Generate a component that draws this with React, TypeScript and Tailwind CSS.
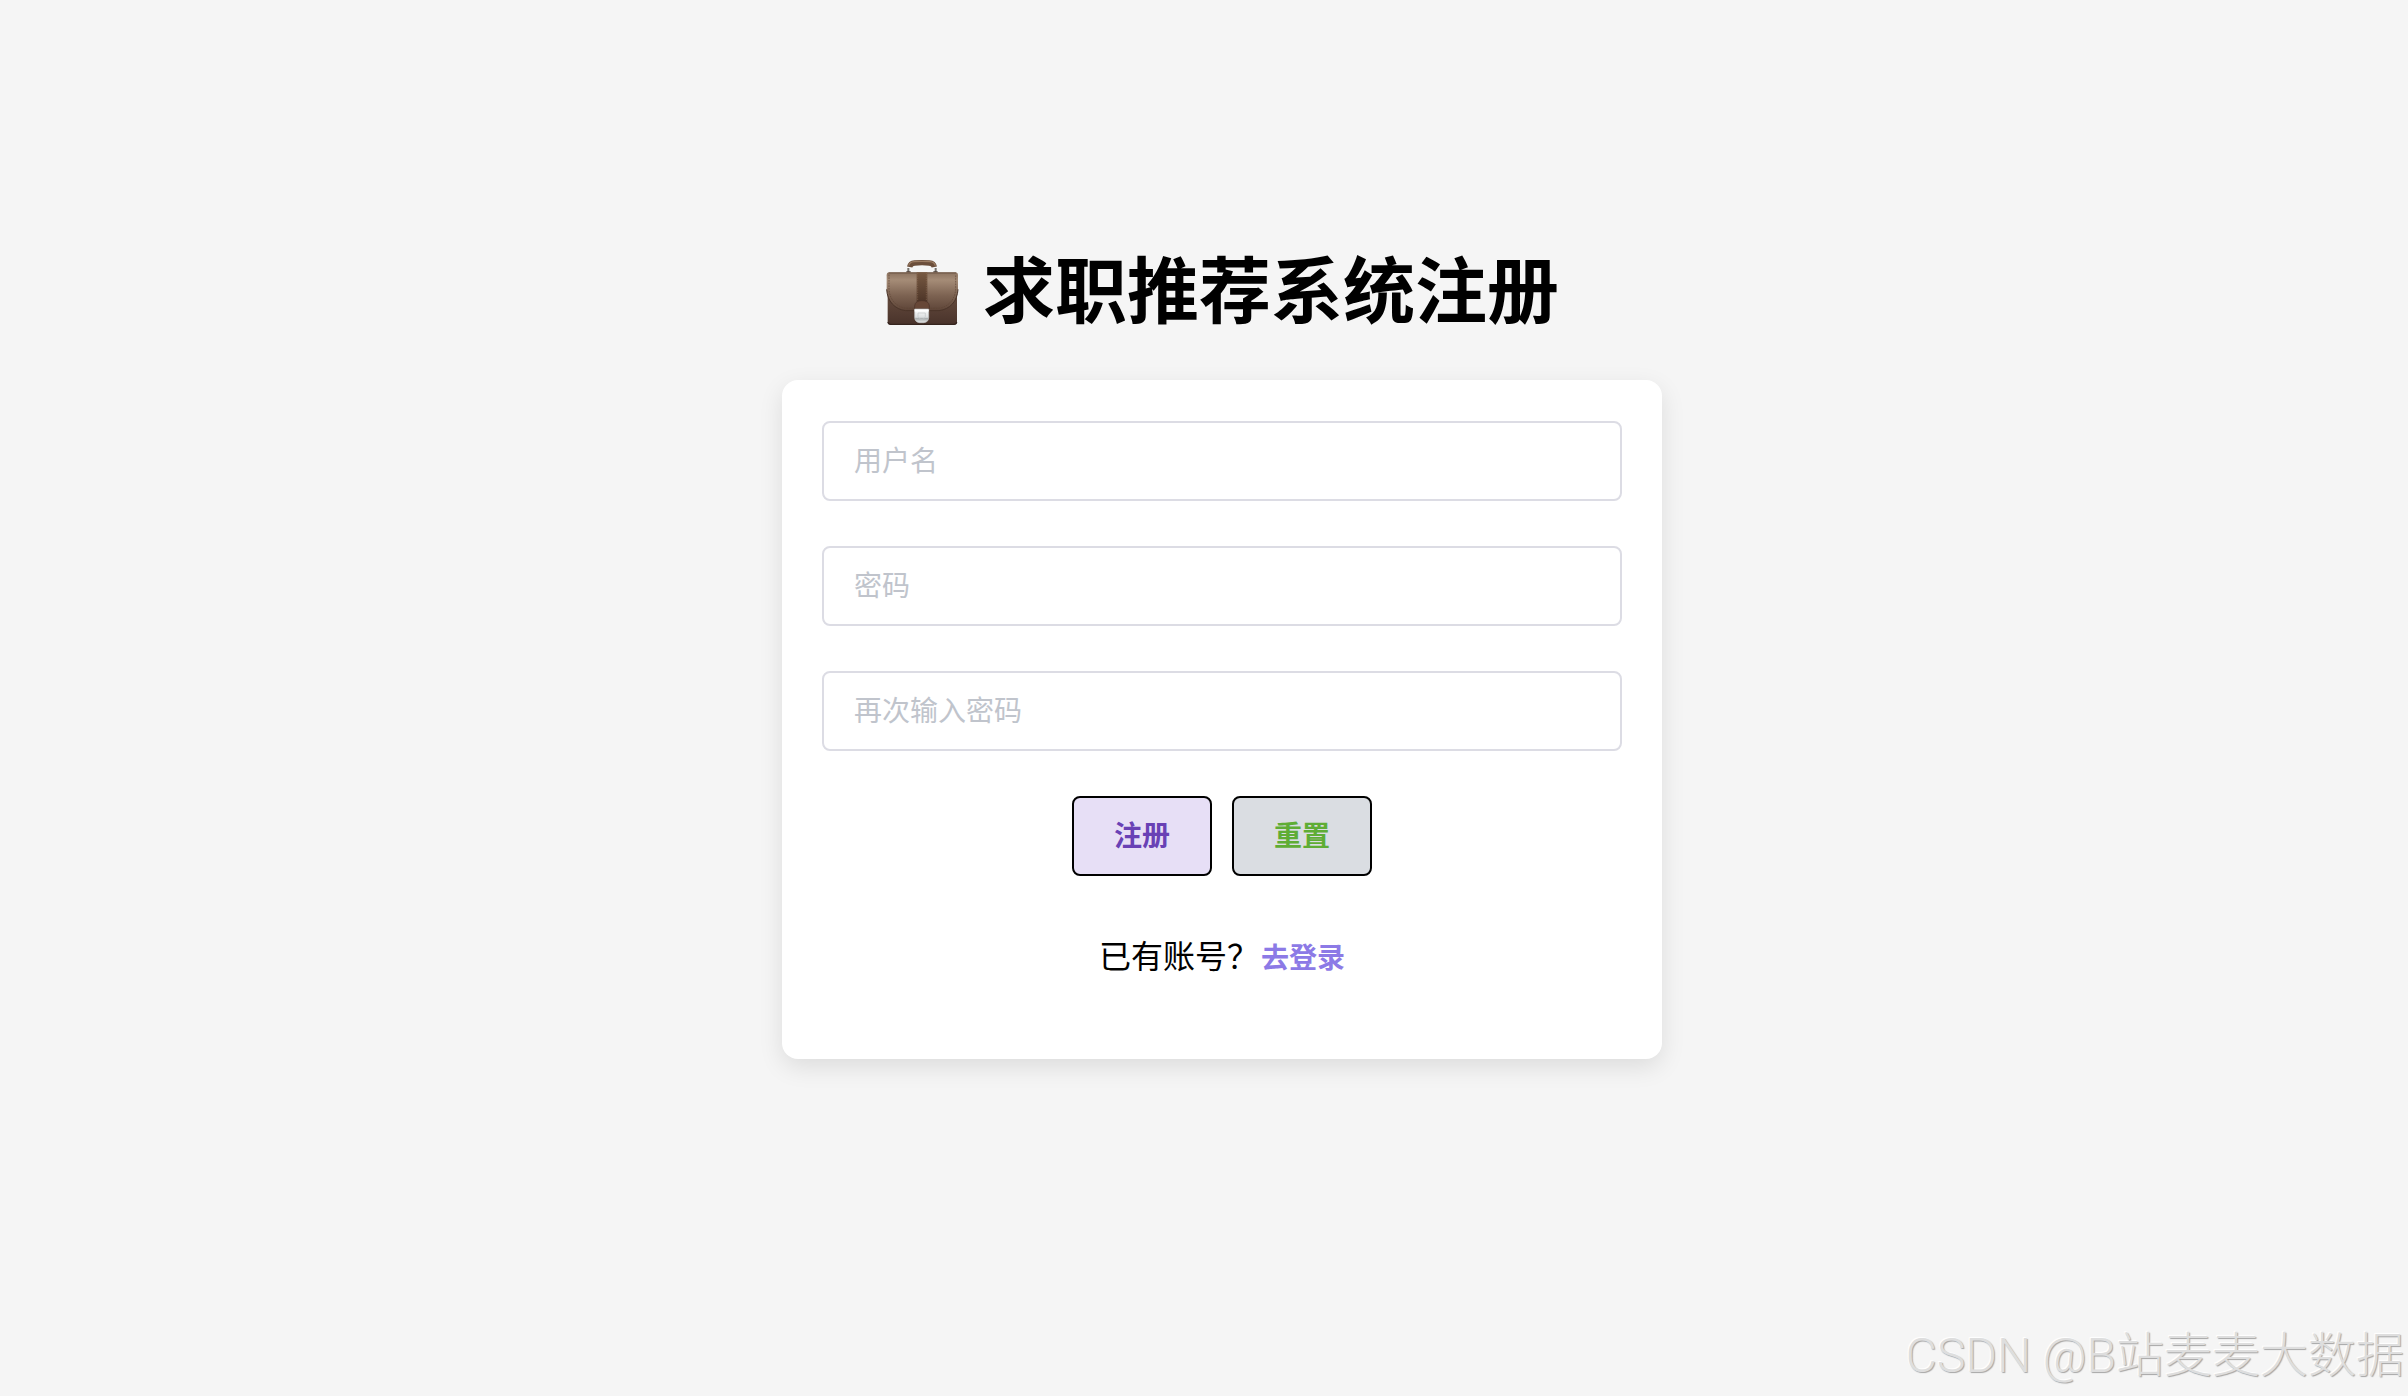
import { useState } from "react";
import type { FormEvent } from "react";

const fields = [
  { id: "username", label: "用户名", type: "text" },
  { id: "password", label: "密码", type: "password" },
  { id: "confirm", label: "再次输入密码", type: "password" },
];

const emptyForm: Record<string, string> = { username: "", password: "", confirm: "" };

const Briefcase = () => (
  <svg viewBox="45 54 222 204" className="w-[74px] h-[68px] shrink-0" aria-hidden="true">
    <defs>
      <linearGradient id="body" x1="0" y1="0" x2="0" y2="1">
        <stop offset="0" stopColor="#6f5748" />
        <stop offset="0.6" stopColor="#5c4337" />
        <stop offset="1" stopColor="#49332b" />
      </linearGradient>
      <linearGradient id="flap" x1="0" y1="0" x2="0" y2="1">
        <stop offset="0" stopColor="#8b725f" />
        <stop offset="0.2" stopColor="#a58c77" />
        <stop offset="0.6" stopColor="#7d6352" />
        <stop offset="1" stopColor="#5e4538" />
      </linearGradient>
      <linearGradient id="strap" x1="0" y1="0" x2="0" y2="1">
        <stop offset="0" stopColor="#775942" />
        <stop offset="1" stopColor="#4c3427" />
      </linearGradient>
      <linearGradient id="clasp" x1="0" y1="0" x2="0" y2="1">
        <stop offset="0" stopColor="#ffffff" />
        <stop offset="0.6" stopColor="#dcdfe0" />
        <stop offset="0.7" stopColor="#a9adae" />
        <stop offset="1" stopColor="#e8e9e9" />
      </linearGradient>
    </defs>
    {/* handle */}
    <path d="M115 96V84M197 96V84" stroke="#77736e" strokeWidth="6" />
    <path d="M109 96h13M190 96h13" stroke="#4d4039" strokeWidth="4" />
    <path d="M119 81q2-11 15-12q22-2 44 0q13 1 15 12" fill="none" stroke="#6b4e3b" strokeWidth="16" />
    <path d="M116 77q3-11 16-12q24-2 48 0q13 1 16 12" fill="none" stroke="#9a7b62" strokeWidth="4" />
    {/* case */}
    <path d="M53 105h208v141q0 8-9 8H62q-9 0-9-8z" fill="url(#body)" />
    <path d="M54 246q1 7 8 7h190q7 0 8-7" fill="none" stroke="#35241e" strokeWidth="4" />
    <path
      d="M58 97h198q8 0 8 9v42c-2 36-24 60-57 64H107c-33-4-55-28-57-64v-42q0-9 8-9z"
      fill="url(#flap)"
    />
    <path d="M50 148c2 36 24 60 57 64h100c33-4 55-28 57-64" fill="none" stroke="#4a3429" strokeWidth="3" />
    <path
      d="M57 104v44c2 31 22 53 52 57h96c30-4 50-26 52-57v-44"
      fill="none"
      stroke="#5d4435"
      strokeWidth="2"
      strokeDasharray="5 3"
    />
    <path d="M56 99h202" stroke="#6c5444" strokeWidth="3" />
    {/* strap and lock */}
    <path d="M140 97h32v90h-32z" fill="url(#strap)" />
    <path d="M143 99v86M169 99v86" stroke="#927159" strokeWidth="1.5" strokeDasharray="4 3" />
    <path d="M134 206v-9q2-15 22-15t22 15v9z" fill="#674737" stroke="#4a3127" strokeWidth="2" />
    <path d="M134 207h42v26q-1 14-15 15h-12q-14-1-15-15z" fill="url(#clasp)" stroke="#c3c4c4" strokeWidth="2" />
    <path d="M134 212h42" stroke="#ffffff" strokeWidth="5" />
    <path d="M144 219h22v11q-2 8-11 8t-11-8z" fill="none" stroke="#c2c6c7" strokeWidth="2" />
  </svg>
);

const App = () => {
  const [form, setForm] = useState(emptyForm);

  const handleSubmit = (e: FormEvent) => {
    e.preventDefault();
  };

  return (
    <div className="relative min-h-screen overflow-hidden bg-[#f5f5f5] text-black font-['Liberation_Sans','Noto_Sans_CJK_SC',sans-serif]">
      <main className="flex flex-col items-center pt-60 pb-60 pl-9">
        <h1 className="flex items-start gap-6 pt-[18px] text-[72px] leading-[68px] font-bold">
          <Briefcase />
          <span>求职推荐系统注册</span>
        </h1>

        <form
          onSubmit={handleSubmit}
          className="mt-[54px] flex w-full max-w-[880px] flex-col gap-[45px] rounded-2xl bg-white px-10 pt-[41px] pb-19 shadow-[0_8px_24px_rgba(0,0,0,0.1)]"
        >
          {fields.map((field) => (
            <input
              key={field.id}
              id={field.id}
              type={field.type}
              aria-label={field.label}
              placeholder={field.label}
              value={form[field.id]}
              onChange={(e) => setForm({ ...form, [field.id]: e.target.value })}
              className="h-20 w-full rounded-lg border-2 border-[#dcdce4] bg-white px-[30px] pt-0.5 text-[28px] text-[#606266] outline-none placeholder:text-[#c0c4cc] focus:border-[#8c7ae6]"
            />
          ))}

          <div className="flex justify-center gap-5">
            <button
              type="submit"
              className="h-20 w-[140px] rounded-lg border-2 border-black bg-[#e7dff6] pt-0.5 text-[28px] font-bold text-[#6941b5]"
            >
              注册
            </button>
            <button
              type="button"
              onClick={() => setForm(emptyForm)}
              className="h-20 w-[140px] rounded-lg border-2 border-black bg-[#dadde2] pt-0.5 text-[28px] font-bold text-[#5fad35]"
            >
              重置
            </button>
          </div>

          <p className="flex items-baseline justify-center gap-0.5 pt-3 text-[32px] leading-[48px]">
            已有账号？
            <a href="#login" className="text-[28px] font-bold text-[#8c7ae6]">
              去登录
            </a>
          </p>
        </form>
      </main>

      <div className="absolute right-1 bottom-1 text-[48px] leading-[72px] font-light whitespace-nowrap text-[#dedede] [text-shadow:1px_1px_1px_#a6a6a6,-1px_-1px_1px_#fff] font-['Roboto','Noto_Sans_CJK_SC',sans-serif]">
        CSDN @B站麦麦大数据
      </div>
    </div>
  );
};

export default App;
